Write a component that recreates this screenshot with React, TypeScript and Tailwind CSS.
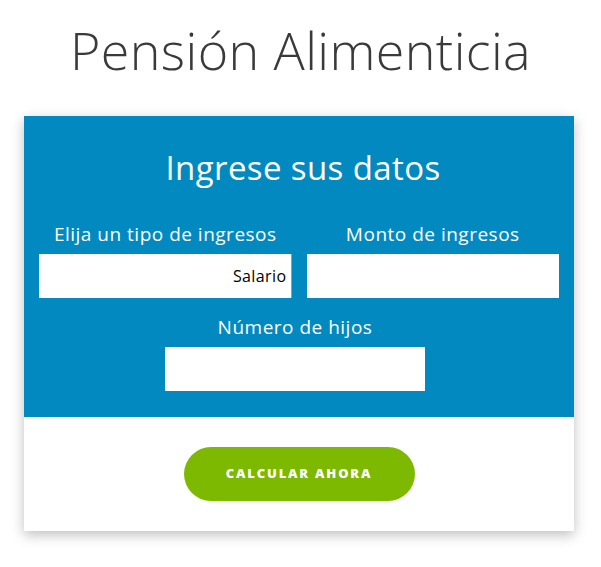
export default function App() {
  return (
    <div className="min-h-[567px] w-[601px] bg-white font-['Open_Sans',sans-serif]">
      <h1 className="pt-[18px] text-center text-[52px] font-light leading-[64px] tracking-[0.4px] text-[#3a3a3a]">
        Pensión Alimenticia
      </h1>

      <div className="mx-[24px] mt-[34px] w-[550px] bg-white shadow-[0_4px_12px_rgba(0,0,0,0.25)]">
        <div className="bg-[#0289bf] px-[15px] pb-[26px] pt-[30px] text-white">
          <h2 className="pl-[8px] text-center text-[33px] leading-[44px] tracking-[0.4px]">Ingrese sus datos</h2>

          <div className="mt-[30px] flex gap-[15px]">
            <div className="flex flex-1 flex-col">
              <label className="text-center text-[19px] leading-[28px] tracking-[0.5px]">Elija un tipo de ingresos</label>
              <div className="mt-[6px] flex h-[44px] items-center justify-end border-r border-[#9a9a9a] bg-white pr-[4px] text-[16px] tracking-[0.4px] text-black">
                Salario
              </div>
            </div>
            <div className="flex flex-1 flex-col">
              <label className="text-center text-[19px] leading-[28px] tracking-[0.5px]">Monto de ingresos</label>
              <input className="mt-[6px] h-[44px] bg-white outline-none" />
            </div>
          </div>

          <div className="mt-[15px] flex flex-col items-center pr-[8px]">
            <label className="text-center text-[19px] leading-[28px] tracking-[0.5px]">Número de hijos</label>
            <input className="mt-[6px] h-[44px] w-[260px] bg-white outline-none" />
          </div>
        </div>

        <div className="flex justify-center pb-[30px] pt-[30px]">
          <button className="h-[54px] w-[231px] rounded-full bg-[#7cb900] text-[13px] font-extrabold tracking-[0.14em] text-white">
            CALCULAR AHORA
          </button>
        </div>
      </div>
    </div>
  );
}
